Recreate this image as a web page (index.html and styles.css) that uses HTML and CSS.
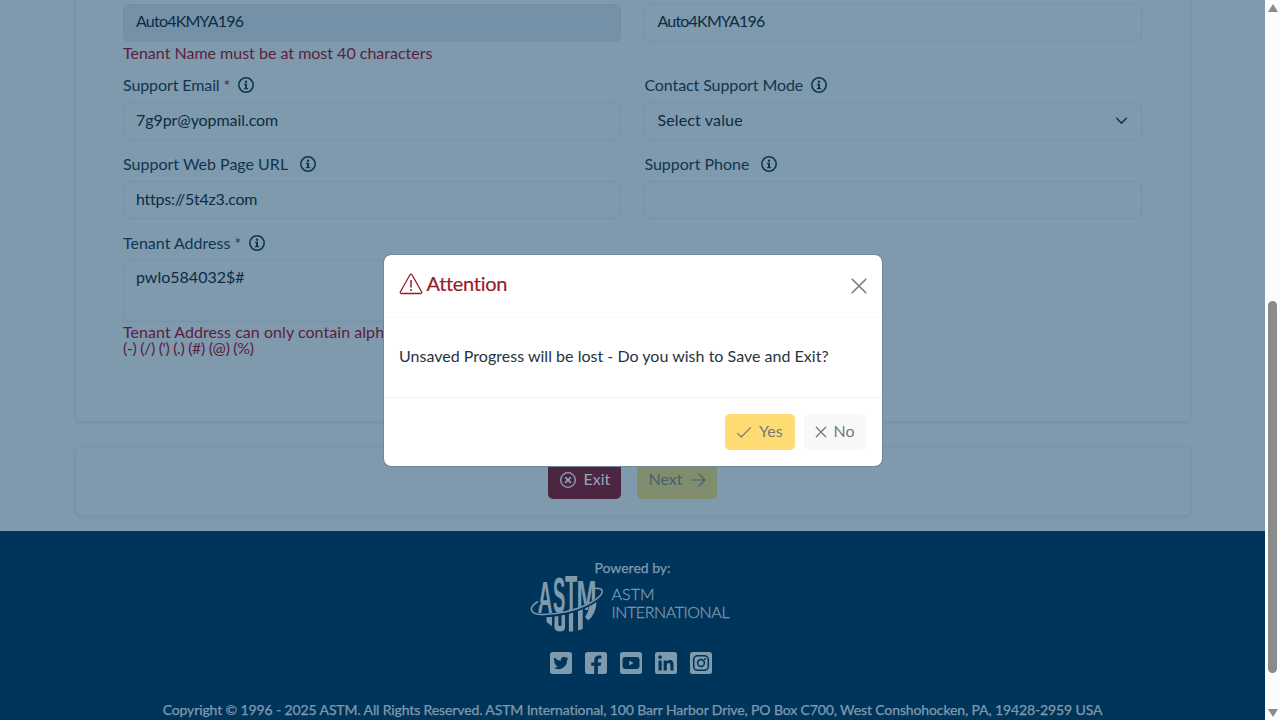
FILE: index.html
```html
<!DOCTYPE html>
<html lang="en">
<head>
<meta charset="utf-8">
<title>Tenant Setup</title>
<link rel="stylesheet" href="styles.css">
</head>
<body>
<svg class="defs" aria-hidden="true">
  <symbol id="info" viewBox="0 0 16 16"><circle cx="8" cy="8" r="7.2" fill="none" stroke="currentColor" stroke-width="1.6"/><circle cx="8" cy="4.7" r="1.25"/><path d="M5.900 6.700h3.100v4.200h1.200v1.400H5.900v-1.400H7V8.100H5.900z"/></symbol>
</svg>
<div class="window">
  <div class="page">
    <main class="content">
      <section class="card form-card">
        <div class="field tenant-name">
          <div class="input disabled"><span class="v1">Auto4KMYA196</span></div>
          <p class="error e1"><span>Tenant Name must be at most 40 characters</span></p>
        </div>
        <div class="field tenant-name">
          <div class="input"><span class="v1">Auto4KMYA196</span></div>
        </div>
        <div class="field">
          <div class="label"><span class="l1">Support Email <span class="req">*</span></span><svg class="info near"><use href="#info"/></svg></div>
          <div class="input"><span class="v2">7g9pr@yopmail.com</span></div>
        </div>
        <div class="field">
          <div class="label"><span class="l2">Contact Support Mode</span><svg class="info near"><use href="#info"/></svg></div>
          <div class="input select"><span class="v3">Select value</span><svg class="chevron" viewBox="0 0 16 16"><path d="M2 5.200 8 11.200l6-6" fill="none" stroke="currentColor" stroke-width="1.900" stroke-linecap="round" stroke-linejoin="round"/></svg></div>
        </div>
        <div class="field">
          <div class="label"><span class="l3">Support Web Page URL</span><svg class="info"><use href="#info"/></svg></div>
          <div class="input"><span class="v4">https://5t4z3.com</span></div>
        </div>
        <div class="field">
          <div class="label"><span class="l4">Support Phone</span><svg class="info"><use href="#info"/></svg></div>
          <div class="input"></div>
        </div>
        <div class="field">
          <div class="label"><span class="l5">Tenant Address <span class="req">*</span></span><svg class="info near"><use href="#info"/></svg></div>
          <div class="input area"><span class="v5">pwlo584032$#</span></div>
          <p class="error e2"><span class="e2a">Tenant Address can only contain alph</span><br><span class="e2b">(-) (/) (') (.) (#) (@) (%)</span></p>
        </div>
      </section>
      <section class="card actions">
        <div class="btn exit"><svg viewBox="0 0 16 16" class="i16" fill="none" stroke="currentColor"><circle cx="8" cy="8" r="7.300" stroke-width="1.300"/><path d="m5.600 5.600 4.800 4.800m0-4.800-4.800 4.800" stroke-width="1.500" stroke-linecap="round"/></svg><span class="b1">Exit</span></div>
        <div class="btn next"><span class="b2">Next</span><svg viewBox="0 0 16 16" class="i16" fill="none" stroke="currentColor" stroke-width="1.200" stroke-linecap="round" stroke-linejoin="round"><path d="M1 8h13.800M8.800 1.900 14.900 8l-6.100 6.100"/></svg></div>
      </section>
    </main>
    <footer class="footer">
      <p class="powered"><span>Powered by:</span></p>
      <svg class="logo" viewBox="0 0 200 60" fill="currentColor">
        <text class="mark" transform="translate(6.800 40) scale(1.020 2.200)" font-size="20">A</text>
        <text class="mark" transform="translate(22 39.500) scale(.92 2.500)" font-size="20">S</text>
        <text class="mark" transform="translate(34 39) scale(1 2.550)" font-size="20">T</text>
        <text class="mark" transform="translate(45.500 37) scale(1.200 2.100)" font-size="20">M</text>
        <path d="M15.500 43.500h5.500V53q-3-1.500-5.500-4.200zM23.500 43l3.800-.6V52q1.700 2.500 3.200 0V41.800l3.500-.8v14q-.5 3.500-5 3.500t-5.500-3.500zM37.900 36h4.200V58.500h-4.200zM47 34.500l4.700-1.500v23l-4.700 1.600zM58.500 30l7.200-3q-.5 14-8.500 20.500l-3.200-3.500q4-5 4.500-14z"/>
        <path d="M9.500 29.500C-3 36-2 42 10 42.500c17 .5 36-4.500 49-11.500 12-6.500 15-12.500 10.500-14.500" fill="none" stroke="#00355b" stroke-width="3.400"/>
        <path d="M7 28.500C-2.500 34-2 41 10 41.500c17 .5 36-4.500 49-11.500 12-6.500 15-12.500 10-14.200-2-.8-4-.6-6-.1" fill="none" stroke="currentColor" stroke-width="1.500"/>
        <text class="brand" x="80.500" y="27" textLength="43">ASTM</text>
        <text class="brand" x="80.500" y="44.500" textLength="118">INTERNATIONAL</text>
      </svg>
      <div class="social">
        <svg viewBox="0 0 22 22"><rect width="22" height="22" rx="2.500"/><path class="cut" d="M18.500 6.300c-.6.3-1.200.4-1.800.5.700-.4 1.100-1 1.400-1.700-.6.4-1.300.6-2 .8a3.100 3.100 0 0 0-5.300 2.800A8.900 8.900 0 0 1 4.400 5.400a3.100 3.100 0 0 0 1 4.200c-.5 0-1-.2-1.400-.4 0 1.500 1.100 2.800 2.500 3.100-.4.1-.9.1-1.400 0 .4 1.300 1.600 2.200 2.900 2.200A6.300 6.300 0 0 1 3.400 15.800 8.900 8.900 0 0 0 17 7.900c.6-.4 1.100-1 1.500-1.600z"/></svg>
        <svg viewBox="0 0 22 22"><rect width="22" height="22" rx="2.500"/><path class="cut" d="M9.300 22v-8.200H6.200v-3.300h3.100V8c0-3 1.800-4.600 4.500-4.600 1 0 2 .1 2.600.3v2.900h-1.500c-1.500 0-2 .9-2 1.900v2h3.400l-.6 3.300h-2.800V22z"/></svg>
        <svg viewBox="0 0 22 22"><rect width="22" height="22" rx="2.500"/><rect class="cut" x="2.500" y="5" width="17" height="12" rx="3"/><path d="m9.300 8.500 4.300 2.500-4.300 2.500z"/></svg>
        <svg viewBox="0 0 22 22"><rect width="22" height="22" rx="2.500"/><circle class="cut" cx="5.100" cy="5.100" r="1.900"/><path class="cut" d="M3.500 8.400h3.200v10.200H3.500zM8.600 8.400h3v1.400c.6-1 1.700-1.700 3.100-1.700 3.200 0 3.800 2.100 3.800 4.900v5.600h-3.100v-5c0-1.200 0-2.700-1.700-2.700s-1.900 1.300-1.900 2.600v5.100H8.600z"/></svg>
        <svg viewBox="0 0 22 22"><rect width="22" height="22" rx="2.500"/><rect class="ring" x="3.700" y="3.700" width="14.600" height="14.600" rx="4"/><circle class="ring" cx="11" cy="11" r="3.400"/><circle class="cut" cx="15" cy="7" r="1"/></svg>
      </div>
      <p class="copy"><span>Copyright © 1996 - 2025 ASTM. All Rights Reserved. ASTM International, 100 Barr Harbor Drive, PO Box C700, West Conshohocken, PA, 19428-2959 USA</span></p>
    </footer>
  </div>
  <div class="scrollbar"><i class="up"></i><i class="thumb"></i><i class="down"></i></div>
  <div class="modal" role="dialog">
    <header class="modal-head">
      <svg class="warn" viewBox="0 0 24 22" fill="none" stroke="currentColor" stroke-width="1.300" stroke-linejoin="round"><path d="M11 1.700a1.100 1.100 0 0 1 2 0l9.600 17.100c.5.900 0 1.700-1 1.700H2.400c-1 0-1.500-.8-1-1.700z"/><path d="M12 7v7.500" stroke-width="1.500"/><path d="M12 16.300v1.800" stroke-width="1.700"/></svg>
      <h1><span>Attention</span></h1>
      <svg class="close" viewBox="0 0 16 16" fill="none" stroke="currentColor" stroke-width="1.600" stroke-linecap="round"><path d="m1.200 1.200 13.600 13.600m0-13.600L1.200 14.800"/></svg>
    </header>
    <div class="modal-body"><span class="msg">Unsaved Progress will be lost - Do you wish to Save and Exit?</span></div>
    <footer class="modal-foot">
      <div class="btn yes"><svg viewBox="0 0 16 16" class="i16" fill="none" stroke="currentColor" stroke-width="1.100" stroke-linecap="round" stroke-linejoin="round"><path d="M1.500 9.300 5.300 13 14.500 3.600"/></svg><span class="b3">Yes</span></div>
      <div class="btn no"><svg viewBox="0 0 12 12" class="i12" fill="none" stroke="currentColor" stroke-width="1.300" stroke-linecap="round"><path d="m1.300 1.300 9.400 9.400m0-9.400-9.400 9.400"/></svg><span class="b4">No</span></div>
    </footer>
  </div>
</div>
</body>
</html>
```
FILE: styles.css
```css
* { box-sizing: border-box; }
body { margin: 0; font: 16px/24px Lato, "Open Sans", sans-serif; font-variant-ligatures: none; color: #102f49; overflow: hidden; }
p, h1 { margin: 0; font-weight: 400; }
span { white-space: nowrap; }
.defs { display: block; width: 0; height: 0; }
.defs symbol { fill: currentColor; }
.window { position: relative; display: flex; width: 1280px; height: 720px; overflow: hidden; }
.page { width: 1265px; height: 720px; overflow: hidden; background: #7f9aad; }
.content { display: flex; flex-direction: column; gap: 24px; height: 531px; padding: 0 74.500px 15px; }
.card { border: 1px solid #7893a9; border-radius: 6px; box-shadow: 0 1px 3px rgba(0, 51, 89, .1); }
.form-card { height: 422px; border-top: 0; border-radius: 0 0 6px 6px; padding: 4px 47.500px 0; display: grid; grid-template-columns: 498px 497.500px; column-gap: 23.400px; grid-template-rows: 69px 79px 79px auto; }
.input { display: flex; align-items: center; height: 38px; padding: 0 12px 3px; border: 1px solid #7592a8; border-radius: 6px; color: #0d2b43; }
.tenant-name .input { padding-bottom: 4px; height: 37.500px; }
.disabled { background: #7591a7; border-color: #708da4; }
.select { justify-content: space-between; }
.chevron { width: 13px; height: 13px; color: #123752; margin: 2px 1px 0 0; }
.area { height: 62px; align-items: flex-start; padding-top: 4px; }
.label { display: flex; align-items: center; height: 29px; padding-bottom: 5px; color: #103550; }
.req { color: #40283f; }
.info { width: 16px; height: 16px; margin: 0 0 0 12px; color: #103650; }
.info.near { margin-left: 8px; }
.error { color: #5a213d; }
.e1 { line-height: 21px; }
.e2 { line-height: 16px; padding-top: 2px; }
.v1 { letter-spacing: -.78px; }
.v2 { letter-spacing: -.07px; }
.v3 { letter-spacing: .15px; }
.v4 { letter-spacing: -.25px; }
.l1, .l2 { letter-spacing: -.1px; }
.e2a { letter-spacing: .05px; }
.e2b { letter-spacing: -.35px; }
.actions { height: 70px; display: flex; justify-content: center; gap: 16px; padding-top: 15px; }
.btn { display: flex; align-items: center; height: 37px; border-radius: 5px; padding: 0 11.500px 1px; }
.btn span { margin-top: -2px; }
.i16 { width: 16px; height: 16px; flex: none; }
.i12 { width: 12px; height: 12px; flex: none; }
.exit { width: 73px; gap: 8px; background: #4c2541; color: #8fa9bb; }
.next { width: 80px; gap: 7px; background: #818e6d; color: #446170; }
.footer { height: 189px; background: #00355b; color: #809aad; display: flex; flex-direction: column; align-items: center; font-size: 14px; line-height: 20px; -webkit-text-stroke: .25px; }
.powered { padding-top: 27px; }
.logo { width: 200px; height: 60px; margin-top: -5px; margin-right: 4px; overflow: visible; -webkit-text-stroke: 0; }
.mark { font-family: "Liberation Sans", sans-serif; font-weight: 700; }
.brand { font-size: 16px; font-weight: 300; stroke: currentColor; stroke-width: .3px; }
.social { display: flex; gap: 13px; margin-top: 19px; margin-right: 4px; }
.social svg { width: 22px; height: 22px; fill: #809aad; }
.social .cut { fill: #00355b; }
.social .ring { fill: none; stroke: #00355b; stroke-width: 1.600; }
.copy { margin-top: 26px; letter-spacing: -.12px; }
.scrollbar { display: flex; flex-direction: column; align-items: center; width: 15px; height: 720px; background: #fcfcfc; }
.up { margin-top: 4px; border: 5px solid transparent; border-top: 0; border-bottom: 8px solid #8b8b8b; }
.thumb { width: 9px; height: 372px; margin-top: 289px; border-radius: 5px; background: #8b8b8b; }
.down { margin-top: 36px; border: 5px solid transparent; border-bottom: 0; border-top: 8px solid #8b8b8b; }
.modal { position: absolute; left: 382.500px; top: 254px; width: 500px; height: 213px; border: 1px solid #72889a; border-radius: 8px; background: #fff; background-clip: padding-box; }
.modal-head { display: flex; align-items: center; height: 63px; padding: 0 15px; border-bottom: 1px solid #f7f8f9; color: #961b2b; }
.warn { width: 24px; height: 22px; margin: -4px 4px 0 0; }
h1 { font-size: 20px; line-height: 28px; margin-top: -6px; letter-spacing: -.3px; -webkit-text-stroke: .2px; }
.close { width: 16px; height: 16px; margin-left: auto; color: #7b7b7b; }
.modal-body { height: 80px; border-bottom: 1px solid #eff1f2; padding: 26px 15.500px 0; color: #27333f; }
.msg { letter-spacing: .02px; }
.modal-foot { display: flex; justify-content: flex-end; gap: 8.500px; padding: 16px 15.500px 0 15px; color: #75797c; }
.yes, .no { height: 36px; }
.yes { width: 70.500px; gap: 7px; background: #ffdc73; }
.no { width: 62.500px; gap: 7px; background: #f8f8f8; padding-left: 11px; }
```
